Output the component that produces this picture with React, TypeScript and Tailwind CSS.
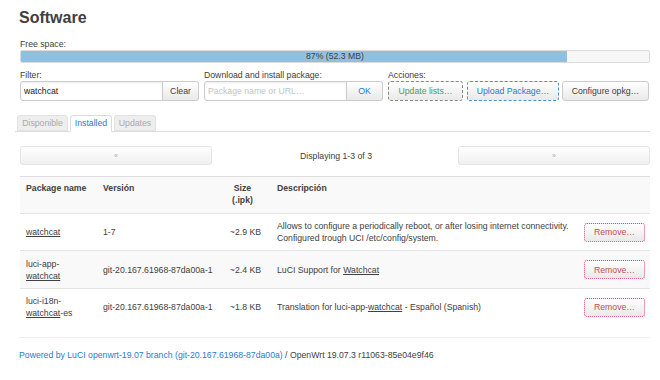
import React from "react";

const btn =
  "flex items-center justify-center rounded-[3px] bg-gradient-to-b from-white to-[#e9e9e9] shadow-[inset_0_1px_0_rgba(255,255,255,0.3)]";

function U({ children }: { children: React.ReactNode }) {
  return <span className="underline decoration-[#404040] underline-offset-[1px]">{children}</span>;
}

function Remove() {
  return (
    <div className={`${btn} w-[61px] h-[19px] border border-dotted border-[#e0487a] text-[#c0504d]`}>Remove…</div>
  );
}

export default function App() {
  return (
    <div className="w-[660px] h-[380px] bg-white text-[#404040] font-['Liberation_Sans',Arial,sans-serif] text-[8.7px] leading-[12px] pl-[20px] pr-[10px] overflow-hidden">
      <h2 className="pt-[8px] text-[16px] leading-[20px] font-bold ml-[-1px]">Software</h2>
      <div className="mt-[10px]">Free space:</div>
      <div className="relative h-[13px] border border-[#dcdcdc] bg-[#f6f6f6] rounded-[2px] overflow-hidden">
        <div className="h-full bg-[#8fc0e0]" style={{ width: "87%" }} />
        <div className="absolute inset-0 flex items-center justify-center leading-none">87% (52.3 MB)</div>
      </div>

      <div className="mt-[7px] flex">
        <div className="w-[179px]">
          <div className="leading-[11px]">Filter:</div>
          <div className="flex h-[20px]">
            <div className="flex-1 flex items-center border border-[#cccccc] rounded-l-[3px] px-[3px] text-[#222] shadow-[inset_0_1px_2px_rgba(0,0,0,0.08)]">
              watchcat
            </div>
            <div className={`${btn} w-[36px] border border-l-0 border-[#cccccc] rounded-l-none text-[#404040]`}>Clear</div>
          </div>
        </div>
        <div className="ml-[5px] w-[179px]">
          <div className="leading-[11px]">Download and install package:</div>
          <div className="flex h-[20px]">
            <div className="flex-1 flex items-center border border-[#cccccc] rounded-l-[3px] px-[3px] text-[#c4c4c4] shadow-[inset_0_1px_2px_rgba(0,0,0,0.08)]">
              Package name or URL…
            </div>
            <div className={`${btn} w-[36px] border border-l-0 border-[#cccccc] rounded-l-none text-[#1f7ad6]`}>OK</div>
          </div>
        </div>
        <div className="ml-[5px] flex-1">
          <div className="leading-[11px]">Acciones:</div>
          <div className="flex h-[20px]">
            <div className={`${btn} w-[75px] border border-dashed border-[#7f8f7f] text-[#4aa04a]`}>Update lists…</div>
            <div className={`${btn} ml-[4px] w-[92px] border border-dashed border-[#4a90d0] text-[#1f7ad6]`}>Upload Package…</div>
            <div className={`${btn} ml-[3px] w-[87px] border border-[#cccccc] text-[#404040]`}>Configure opkg…</div>
          </div>
        </div>
      </div>

      <div className="mt-[14px] ml-[-5px] pl-[2px] flex h-[17px] border-b border-[#dddddd]">
        <div className="w-[51px] h-[16px] flex items-center justify-center border border-[#e2e2e2] rounded-t-[3px] bg-[#eeeeee] text-[#aaaaaa]">Disponible</div>
        <div className="ml-[2px] w-[42px] h-[17px] flex items-center justify-center border border-[#dddddd] border-b-white rounded-t-[3px] bg-white text-[#1f7ad6] pb-[1px]">Installed</div>
        <div className="ml-[2px] w-[42px] h-[16px] flex items-center justify-center border border-[#e2e2e2] rounded-t-[3px] bg-[#eeeeee] text-[#aaaaaa]">Updates</div>
      </div>

      <div className="mt-[14px] flex items-center justify-between">
        <div className={`${btn} w-[192px] h-[19px] border border-[#e4e4e4] from-[#fbfbfb] to-[#f0f0f0] text-[#aaa] text-[7px]`}>«</div>
        <div className="ml-[2px]">Displaying 1-3 of 3</div>
        <div className={`${btn} w-[192px] h-[19px] border border-[#e4e4e4] from-[#fbfbfb] to-[#f0f0f0] text-[#aaa] text-[7px]`}>»</div>
      </div>

      <div className="mt-[11px]">
        <div className="grid grid-cols-[77px_124px_47px_310px_72px] h-[37px] border-t border-[#dddddd] bg-[#f9f9f9] font-bold">
          <div className="pl-[6px] pt-[5px]">Package name</div>
          <div className="pl-[6px] pt-[5px]">Versión</div>
          <div className="pl-[3px] pr-[7px] pt-[5px] text-center">Size<br />(.ipk)</div>
          <div className="pl-[9px] pt-[5px]">Descripción</div>
          <div />
        </div>

        <div className="grid grid-cols-[77px_124px_47px_310px_72px] h-[37px] border-t border-[#e3e3e3] bg-white items-center">
          <div className="pl-[6px]"><U>watchcat</U></div>
          <div className="pl-[6px]">1-7</div>
          <div className="pl-[3px] pr-[7px] text-right whitespace-nowrap">~2.9 KB</div>
          <div className="pl-[9px] pr-[4px]">Allows to configure a periodically reboot, or after losing internet connectivity. Configured trough UCI /etc/config/system.</div>
          <div className="flex justify-end pr-[5px]"><Remove /></div>
        </div>

        <div className="grid grid-cols-[77px_124px_47px_310px_72px] h-[38px] border-t border-[#e3e3e3] bg-[#f9f9f9] items-center">
          <div className="pl-[6px]">luci-app-<br /><U>watchcat</U></div>
          <div className="pl-[6px] whitespace-nowrap">git-20.167.61968-87da00a-1</div>
          <div className="pl-[3px] pr-[7px] text-right whitespace-nowrap">~2.4 KB</div>
          <div className="pl-[9px] pr-[4px]">LuCI Support for <U>Watchcat</U></div>
          <div className="flex justify-end pr-[5px]"><Remove /></div>
        </div>

        <div className="grid grid-cols-[77px_124px_47px_310px_72px] h-[37px] border-t border-[#e3e3e3] bg-white items-center">
          <div className="pl-[6px]">luci-i18n-<br /><U>watchcat</U>-es</div>
          <div className="pl-[6px] whitespace-nowrap">git-20.167.61968-87da00a-1</div>
          <div className="pl-[3px] pr-[7px] text-right whitespace-nowrap">~1.8 KB</div>
          <div className="pl-[9px] pr-[4px]">Translation for luci-app-<U>watchcat</U> - Español (Spanish)</div>
          <div className="flex justify-end pr-[5px]"><Remove /></div>
        </div>
      </div>

      <div className="mt-[12px] border-t border-[#eeeeee] pt-[11px] ml-[-1px]">
        <span className="text-[#1f7ad6]">Powered by LuCI openwrt-19.07 branch (git-20.167.61968-87da00a)</span>
        <span> / OpenWrt 19.07.3 r11063-85e04e9f46</span>
      </div>
    </div>
  );
}
